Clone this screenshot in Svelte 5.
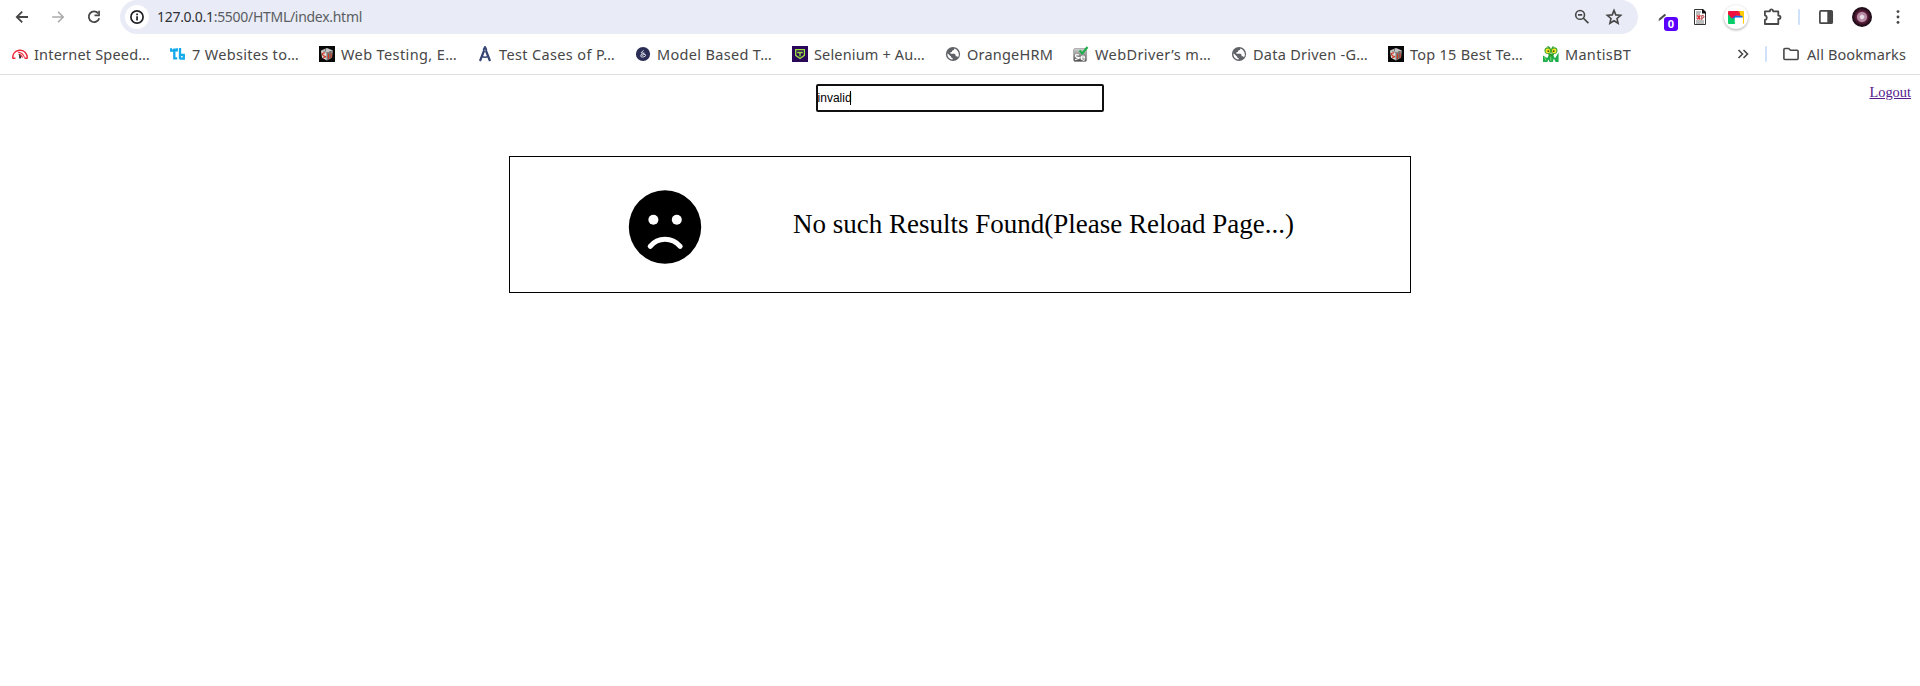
<script>
  const bookmarks = [
    { icon: 'speed', label: 'Internet Speed…', slot: 158, text: 116 },
    { icon: 'tb', label: '7 Websites to…', slot: 149, text: 107 },
    { icon: 'cube', label: 'Web Testing, E…', slot: 158, text: 116 },
    { icon: 'compass', label: 'Test Cases of P…', slot: 158, text: 116 },
    { icon: 'round', label: 'Model Based T…', slot: 157, text: 115 },
    { icon: 'shield', label: 'Selenium + Au…', slot: 153, text: 111 },
    { icon: 'globe', label: 'OrangeHRM', slot: 128, text: 86 },
    { icon: 'se', label: 'WebDriver’s m…', slot: 158, text: 116 },
    { icon: 'globe', label: 'Data Driven -G…', slot: 157, text: 115 },
    { icon: 'cube', label: 'Top 15 Best Te…', slot: 155, text: 113 },
    { icon: 'mantis', label: 'MantisBT', slot: 100, text: 66 }
  ];

  // Spreads the letters so that the label fills the given width.
  function fit(node, width) {
    const apply = () => {
      node.style.letterSpacing = '0px';
      const natural = node.getBoundingClientRect().width;
      node.style.letterSpacing = (width - natural) / node.textContent.length + 'px';
    };
    apply();
    document.fonts.ready.then(apply);
  }
</script>

<div class="browser">
  <div class="toolbar">
    <div class="cell"><svg width="16" height="16" viewBox="0 0 16 16"><path d="M14 8H3M8.2 2.6 2.8 8 8.2 13.4" fill="none" stroke="#474747" stroke-width="1.8" /></svg></div>
    <div class="cell"><svg width="16" height="16" viewBox="0 0 16 16"><path d="M2.2 8H13M8 2.8 13.2 8 8 13.2" fill="none" stroke="#ababab" stroke-width="1.6" /></svg></div>
    <div class="cell"><svg width="16" height="16" viewBox="0 0 16 16"><path d="M12.2 4.4A5.3 5.3 0 1 0 13.2 9.2" fill="none" stroke="#474747" stroke-width="1.8" /><path d="M13.9 1.8v5.4H8.5V5.5h3.7V1.8z" fill="#474747" /></svg></div>
    <div class="omnibox">
      <div class="info"><svg width="16" height="16" viewBox="0 0 16 16"><circle cx="8" cy="8" r="6.1" fill="none" stroke="#202124" stroke-width="1.7" /><path d="M7.2 7.2h1.7v4.2H7.2zM7.2 4.5h1.7v1.7H7.2z" fill="#202124" /></svg></div>
      <span class="url"><span use:fit={205}><b>127.0.0.1</b>:5500/HTML/index.html</span></span>
      <svg class="lens" width="16" height="16" viewBox="0 0 16 16"><circle cx="6.1" cy="5.9" r="4.4" fill="none" stroke="#474747" stroke-width="1.6" /><path d="M4 5.9h4.2M9.2 9l5.2 5.2" stroke="#474747" stroke-width="1.7" /></svg>
      <svg width="18" height="18" viewBox="0 0 18 18"><path d="m9 2.4 1.8 4.5 4.9.4-3.7 3.2 1.1 4.7L9 12.7l-4.1 2.5L6 10.5 2.3 7.3l4.9-.4z" fill="none" stroke="#474747" stroke-width="1.6" /></svg>
    </div>
    <div class="cell pen">
      <svg width="16" height="16" viewBox="0 0 16 16"><path d="M3.2 10.8 9.4 5.4" stroke="#4a4a4a" stroke-width="2" /><path d="m2.4 12.3.4-1.8 1.4 1.3z" fill="#888" /></svg>
      <span class="badge">0</span>
    </div>
    <div class="cell"><svg width="16" height="18" viewBox="0 0 16 18"><path d="M2.5 1.5h8l3 3v12h-11z" fill="#fff" stroke="#333" /><path d="M10 1h1l3 3v1.5h-4z" fill="#111" /><path d="M4 4h5M4 6h4M4 13h8M4 15h8M4 8h1M4 10h1" stroke="#777" /><path d="m5.3 7.3 3 4.2m0-4.2-3 4.2" fill="none" stroke="#db3438" stroke-width="1.5" /><path d="M9.8 12V7.5h1q1.1 0 1.1 1.2t-1.1 1.3h-1" fill="none" stroke="#a33" stroke-width="1" /></svg></div>
    <div class="cell"><div class="disc"><svg width="16" height="13" viewBox="0 0 16 13"><rect width="16" height="13" rx="1.3" fill="#ffcb05" /><path d="M0 3v8.7Q0 13 1.3 13H7V6z" fill="#06ce69" /><path d="M1.3 0H11L8 5.2 3.8 7.4 0 3V1.3Q0 0 1.3 0z" fill="#f0103f" /><path d="M3.6 7.4 7.6 4.4 14.5 4.4V7.2H7z" fill="#1767e6" /><path d="M11 0h3.7Q16 0 16 1.3V5l-3.4-.4z" fill="#ffcb05" /><path d="M8 4.6 11.2 0l1.2 4.8z" fill="#ef0b43" /><rect x="6.8" y="6.6" width="8.2" height="6.4" rx=".7" fill="#fff" /></svg></div></div>
    <div class="cell"><svg width="22" height="20" viewBox="0 0 22 20"><path d="M3.9 4.3h5V3.9a1.6 1.6 0 0 1 3.2 0v.4h5.2v4.3h.5a1.7 1.7 0 0 1 0 3.4h-.5v5H3.9v-4a2.4 2.4 0 0 0 0-4.7z" fill="none" stroke="#474747" stroke-width="1.8" stroke-linejoin="round" /></svg></div>
    <div class="split"></div>
    <div class="cell"><svg width="16" height="16" viewBox="0 0 16 16"><rect x="1.9" y="1.9" width="12.3" height="12.3" rx="1" fill="none" stroke="#474747" stroke-width="1.7" /><path d="M9.3 2h5v12h-5z" fill="#474747" /></svg></div>
    <div class="cell"><div class="avatar"></div></div>
    <div class="cell"><svg width="16" height="16" viewBox="0 0 16 16"><circle cx="8" cy="2.6" r="1.45" fill="#474747" /><circle cx="8" cy="8" r="1.45" fill="#474747" /><circle cx="8" cy="13.4" r="1.45" fill="#474747" /></svg></div>
  </div>

  <div class="bookmarks">
    {#each bookmarks as b}
      <div class="mark" style="width: {b.slot}px">
        <svg width="16" height="16" viewBox="0 0 16 16">
          {#if b.icon === 'speed'}
            <path d="M.8 12A7.2 7.2 0 0 1 14.6 8.6 7 7 0 0 1 15.2 12" fill="none" stroke="#ed2939" stroke-width="1.5" />
            <path d="M.4 12.2h3M12.6 12.2h3" stroke="#ed2939" stroke-width="1.4" />
            <path d="M6 6.2q5 .3 6.6 5.4M6.5 8.2q3 .3 4 3.4" fill="none" stroke="#ed2939" stroke-width="1.1" />
            <path d="M7.2 7.5v5h1.5l.4-2z" fill="#28292d" />
          {:else if b.icon === 'tb'}
            <path d="M1 2.2v2.4h2.6M4.3 2.6v9.8h2.9M4.3 4.4h2.5V2.2M10 2.2v11M9.2 3.2h2M10 12.6h3.8V8.8H10" fill="none" stroke="#12a9ea" stroke-width="2.3" />
          {:else if b.icon === 'cube'}
            <rect width="16" height="16" fill="#080808" />
            <path d="m2 4.5 6-2.6 6 2.6-5.5 2.2z" fill="#c5c5c5" />
            <path d="m2 4.5 6 2.2v7.8L3 11.7z" fill="#ddd" />
            <path d="m14 4.5-6 2.2v7.8l5-2.8z" fill="#8d8d8d" />
            <path d="M6 7q-3-.3-2.5 1.4T6 10.3 4 12M9.5 13V7.5M12 12V6.8" fill="none" stroke="#cf3922" stroke-width="1.3" />
            <path d="M8 6.8v7.5M6.5 3v2.5M11 5v7" stroke="#555" stroke-width=".7" />
          {:else if b.icon === 'compass'}
            <path d="M7.3 4 3 15M8.7 4 13 15" stroke="#354573" stroke-width="2.2" />
            <circle cx="8" cy="3.2" r="2.1" fill="#354573" />
            <path d="M8 0v2M4.7 10.2q3.3 2 6.6 0" fill="none" stroke="#354573" stroke-width="1.6" />
            <circle cx="8" cy="4.2" r=".7" fill="#b9c1d6" />
          {:else if b.icon === 'round'}
            <circle cx="8" cy="8" r="7.1" fill="#2b2e54" />
            <path d="M8.6 4.2 6 6.8l3.4.4L6 8.7q-1 2.2 1 2.4t3.7-1.3q.3-1.8-1.8-1.3L7.3 9.6" fill="none" stroke="#d7d8e4" stroke-width="1" />
          {:else if b.icon === 'shield'}
            <rect width="16" height="16" fill="#2b075b" />
            <path d="M3.7 3.7h8.7v5.7L8 12.5 3.7 9.4z" fill="none" stroke="#9be33e" stroke-width="1.3" />
            <path d="M5.3 6.5h5.4M8 6.5v4" stroke="#9be33e" stroke-width="1.3" />
          {:else if b.icon === 'globe'}
            <circle cx="8" cy="8" r="7.1" fill="#5f6368" />
            <path d="M9.4 2.6q0 1.6-1.5 1.8l-.9.3v1.4H5.5v1.6h3.7q1.4 0 1.4 1.6v.9h1.2q1 .2 1.2 1.2Q14.6 8.9 13.4 6.2 12 3.4 9.4 2.6z" fill="#fff" />
            <path d="M2.5 7.2 5.9 10.4q.2 1.5 1.7 1.5v1.6Q4 13.2 2.7 10 2.2 8.4 2.5 7.2z" fill="#fff" />
          {:else if b.icon === 'se'}
            <defs><linearGradient id="steel" x2="0" y2="1"><stop stop-color="#d5d5d5" /><stop offset="1" stop-color="#4c4c4c" /></linearGradient></defs>
            <rect x=".6" y="2.5" width="13" height="13" rx="1.6" fill="url(#steel)" stroke="#888" stroke-width=".6" />
            <path d="M6 9q-3.5-1-3.5.8t3.2 1.7T2 13.8M8 11.8h3.7q-.3-2-2-1.8T8 12t1.8 2 2-.7" fill="none" stroke="#fff" stroke-width="1.2" />
            <path d="m6.5 4.5 2.8 3L14.5 1" fill="none" stroke="#20ae4a" stroke-width="2.1" />
          {:else}
            <path d="M0 9.5 4.2 12 6 9h4l2 3.2L15.6 6.5V16h-3l-1.7-3.6L9.8 16H6.5l-1-2.5L4.3 16H0z" fill="#1fae4b" />
            <path d="M4.8 7.5h6.6L9.6 11H6.5z" fill="#2b9f2a" />
            <circle cx="4.9" cy="4.6" r="3.4" fill="#3da62a" /><circle cx="11.1" cy="4.6" r="3.4" fill="#3da62a" />
            <circle cx="4.8" cy="4.9" r="2.3" fill="#f4e52c" /><circle cx="11.2" cy="4.9" r="2.3" fill="#f4e52c" />
            <circle cx="5.3" cy="5.1" r=".9" fill="#3b3a12" /><circle cx="10.7" cy="5.1" r=".9" fill="#3b3a12" />
            <path d="M4.6.3 7 2M10.5.3 9 2" stroke="#259d31" stroke-width="1.1" />
            <path d="M7.8 10.5V15M1.5 11l1.6 3.6" stroke="#8bdd7b" stroke-width=".9" />
          {/if}
        </svg>
        <span use:fit={b.text}>{b.label}</span>
      </div>
    {/each}
    <div class="overflow"><svg width="16" height="16" viewBox="0 0 16 16"><path d="m3.5 4 4 4-4 4M8.5 4l4 4-4 4" fill="none" stroke="#474747" stroke-width="1.6" /></svg></div>
    <div class="split"></div>
    <div class="all">
      <svg width="16" height="16" viewBox="0 0 16 16"><path d="M.9 3.5q0-1 1-1h3.8l1.8 1.8h6.6q1 0 1 1v7.2q0 1-1 1H1.9q-1 0-1-1z" fill="none" stroke="#474747" stroke-width="1.6" /></svg>
      <span use:fit={99}>All Bookmarks</span>
    </div>
  </div>
</div>

<main>
  <header>
    <div class="search"><span>invalid</span><i></i></div>
    <a href="#logout">Logout</a>
  </header>
  <section>
    <svg width="74" height="74" viewBox="0 0 74 74">
      <ellipse cx="37" cy="37" rx="36.2" ry="36.7" />
      <circle cx="25.4" cy="29.8" r="5" fill="#fff" /><circle cx="48.8" cy="29.8" r="5" fill="#fff" />
      <path d="M22.2 56.3Q28 49.2 37 49.2T52.2 56.3" fill="none" stroke="#fff" stroke-width="5" stroke-linecap="round" />
    </svg>
    <p use:fit={501}>No such Results Found(Please Reload Page...)</p>
  </section>
</main>

<style>
  :global(body) { margin: 0; background: #fff; overflow: hidden; }
  svg { display: block; flex: none; }
  .browser { height: 74px; border-bottom: 1px solid #dedfe1; font-family: "Noto Sans", sans-serif; color: #474747; }
  .toolbar { display: flex; height: 34px; padding-left: 4px; }
  .cell { width: 36px; height: 34px; flex: none; display: flex; align-items: center; justify-content: center; }
  .omnibox { width: 1518px; height: 34px; margin: 0 8px; box-sizing: border-box; padding: 0 15px 0 5px; background: #e9ecf6; border-radius: 17px; display: flex; align-items: center; }
  .info { width: 24px; height: 24px; border-radius: 50%; background: #fff; display: grid; place-items: center; }
  .url { flex: 1; padding-left: 8px; font-size: 14px; line-height: 20px; white-space: nowrap; color: #5a5d62; }
  .url b { font-weight: 400; color: #303236; }
  .lens { margin-right: 15px; }
  .pen { position: relative; }
  .badge { position: absolute; left: 18px; top: 17px; width: 14px; height: 14px; border-radius: 3px; background: #5b00ff; color: #fff; font-weight: 700; font-size: 11px; line-height: 14px; text-align: center; }
  .disc { width: 24px; height: 24px; border-radius: 50%; box-shadow: 0 1px 3px #0005; display: grid; place-items: center; }
  .split { width: 2px; height: 16px; margin: 9px 8px; border-radius: 1px; background: #d0e1fc; flex: none; }
  .avatar { width: 20px; height: 20px; border-radius: 50%; background: radial-gradient(circle, #e7e1e8 0 1.5px, #b9829f 3px, #b497aa 4.5px, #66213f 5.5px, #2c101f 8px, #160811 10px); }
  .bookmarks { display: flex; align-items: center; height: 40px; padding-left: 12px; font-size: 14.5px; line-height: 20px; }
  .mark, .all { display: flex; align-items: center; gap: 6px; flex: none; white-space: nowrap; }
  .mark span, .all span { margin-top: -1px; }
  .overflow { margin-left: 92px; }
  .bookmarks .split { margin: 0 16px 0 14px; }
  .all { gap: 8px; }
  main { font-family: "Liberation Serif", serif; }
  header { display: grid; grid-template-columns: 1fr 288px 1fr; padding-top: 9px; }
  .search { grid-column: 2; box-sizing: border-box; height: 28px; border: 2px solid #101010; border-radius: 2px; display: flex; align-items: center; font: 12px "Liberation Sans", sans-serif; }
  .search span { margin-left: -.4px; }
  .search i { width: 1px; height: 14px; background: #000; margin-left: -1.6px; }
  header a { justify-self: end; margin-right: 9px; font-size: 14.4px; line-height: 17px; color: #551a8b; text-decoration: underline; }
  section { width: 902px; height: 137px; box-sizing: border-box; margin: 44px auto 0 509px; border: 1px solid #000; padding-left: 118px; display: flex; align-items: center; }
  section svg { margin-top: 4px; }
  section p { margin: 0 0 2px 91px; font-size: 27px; line-height: 32px; white-space: nowrap; }
</style>
